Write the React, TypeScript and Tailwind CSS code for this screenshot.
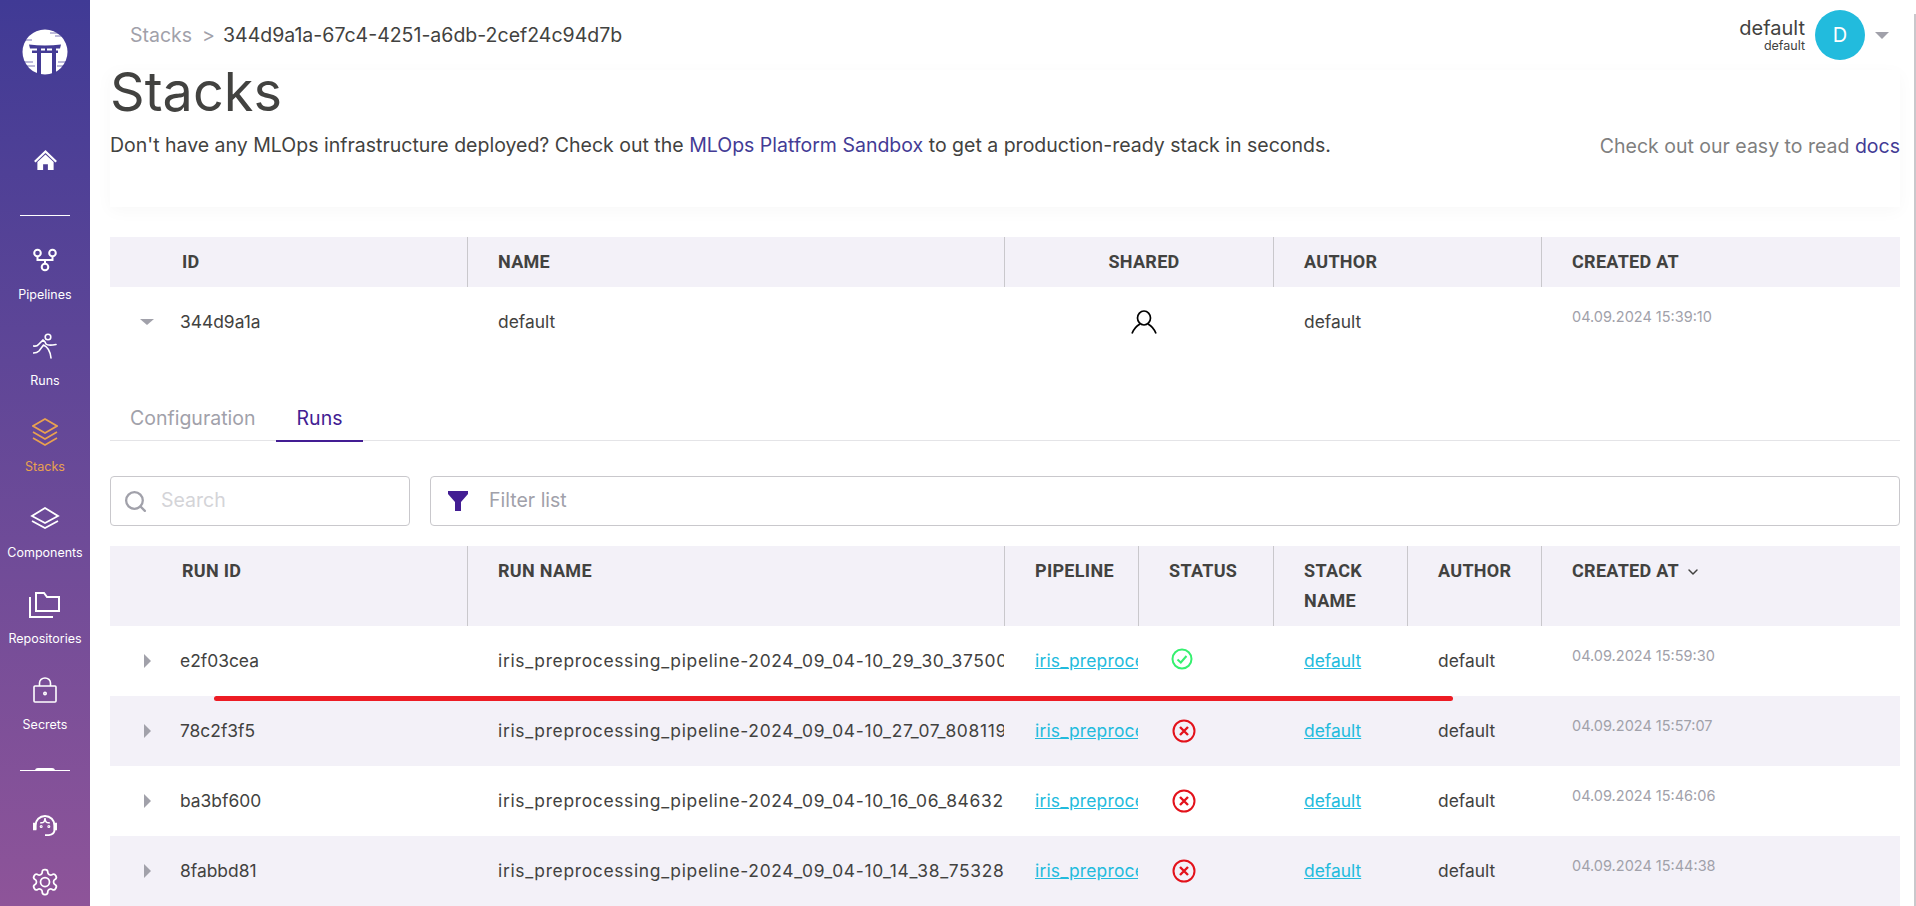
import { ChevronDown, Search } from "lucide-react";
import type { ReactNode } from "react";

const font = "font-['Inter','Liberation_Sans',sans-serif]";

const runs = [
  { id: "e2f03cea", name: "iris_preprocessing_pipeline-2024_09_04-10_29_30_375005", ok: true, date: "04.09.2024 15:59:30" },
  { id: "78c2f3f5", name: "iris_preprocessing_pipeline-2024_09_04-10_27_07_808119", ok: false, date: "04.09.2024 15:57:07" },
  { id: "ba3bf600", name: "iris_preprocessing_pipeline-2024_09_04-10_16_06_846321", ok: false, date: "04.09.2024 15:46:06" },
  { id: "8fabbd81", name: "iris_preprocessing_pipeline-2024_09_04-10_14_38_753281", ok: false, date: "04.09.2024 15:44:38" },
];

function Logo() {
  return (
    <svg width="46" height="46" viewBox="0 0 46 46">
      <circle cx="23" cy="23" r="22.5" fill="#fff" />
      <path d="M7 15.5 Q23 17.5 39 15.5 L38 19.5 H8 Z" fill="#433b95" />
      <path d="M10 21.5 H36 V24 H10 Z" fill="#433b95" />
      <path d="M15 19 H19 V46 H15 Z M30 19 H34 V46 H30 Z" fill="#433b95" />
      <path d="M23 19 H25 V22 H23 Z" fill="#433b95" />
      <path d="M0 11 H10 M33 7 H44 M28 4 H40 M1 33 H11 M36 33 H46 M3 37 H13 M35 37 H44" stroke="#433b95" strokeWidth="0.7" />
    </svg>
  );
}

function NavItem({ icon, label, active }: { icon: ReactNode; label: string; active?: boolean }) {
  return (
    <div className={`flex flex-col items-center h-[86px] ${active ? "text-[#e9a14f]" : "text-white"}`}>
      <div className="h-[36px] flex items-center justify-center">{icon}</div>
      <span className="mt-[8px] text-[12.5px] leading-[18px]">{label}</span>
    </div>
  );
}

function Sidebar() {
  return (
    <aside className="w-[90px] h-[906px] shrink-0 flex flex-col items-center bg-gradient-to-b from-[#403a95] to-[#8e5499] pt-[29px]">
      <Logo />
      <svg className="mt-[75px]" width="23" height="21" viewBox="0 0 24 22" fill="#fff">
        <path d="M12 0 L24 11.5 L22.4 13 L12 3.2 L1.6 13 L0 11.5 Z" />
        <path d="M3.5 12.5 L12 4.8 L20.5 12.5 V21 H14.5 V15 H9.5 V21 H3.5 Z" />
      </svg>
      <div className="mt-[44px] w-[50px] h-px bg-white" />
      <div className="mt-[26px] flex flex-col">
        <NavItem
          label="Pipelines"
          icon={
            <svg width="24" height="24" viewBox="0 0 24 24" fill="none" stroke="currentColor" strokeWidth="2">
              <circle cx="4.5" cy="5" r="3.3" />
              <circle cx="19.5" cy="5" r="3.3" />
              <circle cx="12" cy="19" r="3.3" />
              <path d="M4.5 8.5 V12 H19.5 V8.5 M12 12 V15.5" />
            </svg>
          }
        />
        <NavItem
          label="Runs"
          icon={
            <svg width="24" height="26" viewBox="0 0 24 26" fill="none" stroke="currentColor" strokeWidth="1.6" strokeLinecap="round">
              <circle cx="15" cy="4" r="2.8" />
              <path d="M0.5 13 Q4 13.5 5.5 11.5 L10 7 Q12 8 13 11 Q15 13 23 11.5 M10.5 12 L6 18 Q4 20 0.5 20 M10.5 12 Q17 15 18 25" />
            </svg>
          }
        />
        <NavItem
          active
          label="Stacks"
          icon={
            <svg width="26" height="28" viewBox="0 0 26 28" fill="none" stroke="currentColor" strokeWidth="1.7">
              <path d="M13 1 L25 8 L13 15 L1 8 Z" />
              <path d="M1 14 L13 21 L25 14 M1 20 L13 27 L25 20" />
            </svg>
          }
        />
        <NavItem
          label="Components"
          icon={
            <svg width="30" height="22" viewBox="0 0 30 22" fill="none" stroke="currentColor" strokeWidth="1.8">
              <path d="M15 1 L28 9 L15 16 L2 9 Z" />
              <path d="M2 14 L15 21 L28 14" />
            </svg>
          }
        />
        <NavItem
          label="Repositories"
          icon={
            <svg width="31" height="27" viewBox="0 0 31 27" fill="none" stroke="currentColor" strokeWidth="2">
              <path d="M7 20 V2 H15 L18 6 H30 V20 Z" />
              <path d="M1 6 V26 H24" />
            </svg>
          }
        />
        <NavItem
          label="Secrets"
          icon={
            <svg width="24" height="26" viewBox="0 0 24 26" fill="none" stroke="currentColor" strokeWidth="1.6">
              <rect x="1" y="9" width="22" height="16" rx="1" />
              <path d="M6.5 9 V6 A5.5 5 0 0 1 17.5 6 V9" />
              <circle cx="12" cy="16.5" r="1.2" />
            </svg>
          }
        />
      </div>
      <div className="relative mt-[12px] w-[50px] h-px bg-white">
        <div className="absolute left-[15px] top-[-2px] w-[20px] h-[3px] rounded-t-sm bg-white" />
      </div>
      <svg className="mt-[44px]" width="26" height="23" viewBox="0 0 26 24" fill="none" stroke="#fff" strokeWidth="2">
        <path d="M3 15 V11 A10 10 0 0 1 23 11 V15 Q23 20 17 21 H13" />
        <path d="M3 9 H1.5 V15 H3 Z M23 9 H24.5 V15 H23 Z" fill="#fff" />
        <path d="M8 8 Q13 9 13 3 Q13 9 18 8" strokeWidth="1.6" />
        <circle cx="9" cy="12" r="0.6" />
        <circle cx="17" cy="12" r="0.6" />
      </svg>
      <svg className="mt-[29px] shrink-0" width="30" height="30" viewBox="0 0 24 24" fill="none" stroke="#fff" strokeWidth="1.4" strokeLinejoin="round">
        <path d="M12.22 2h-.44a2 2 0 0 0-2 2v.18a2 2 0 0 1-1 1.73l-.43.25a2 2 0 0 1-2 0l-.15-.08a2 2 0 0 0-2.73.73l-.22.38a2 2 0 0 0 .73 2.73l.15.1a2 2 0 0 1 1 1.72v.51a2 2 0 0 1-1 1.74l-.15.09a2 2 0 0 0-.73 2.73l.22.38a2 2 0 0 0 2.73.73l.15-.08a2 2 0 0 1 2 0l.43.25a2 2 0 0 1 1 1.73V20a2 2 0 0 0 2 2h.44a2 2 0 0 0 2-2v-.18a2 2 0 0 1 1-1.73l.43-.25a2 2 0 0 1 2 0l.15.08a2 2 0 0 0 2.73-.73l.22-.39a2 2 0 0 0-.73-2.73l-.15-.08a2 2 0 0 1-1-1.74v-.5a2 2 0 0 1 1-1.74l.15-.09a2 2 0 0 0 .73-2.73l-.22-.38a2 2 0 0 0-2.73-.73l-.15.08a2 2 0 0 1-2 0l-.43-.25a2 2 0 0 1-1-1.73V4a2 2 0 0 0-2-2z" />
        <circle cx="12" cy="12" r="3.6" />
      </svg>
    </aside>
  );
}

function Triangle({ down }: { down?: boolean }) {
  return down ? (
    <svg width="14" height="6" viewBox="0 0 14 6" className="shrink-0">
      <path d="M0 0 H14 L7 6 Z" fill="#a1a1aa" />
    </svg>
  ) : (
    <svg width="7" height="14" viewBox="0 0 7 14" className="shrink-0">
      <path d="M0 0 L7 7 L0 14 Z" fill="#a1a1aa" />
    </svg>
  );
}

function Head({ children, line = true, className = "" }: { children: ReactNode; line?: boolean; className?: string }) {
  return (
    <div
      className={`pl-[30px] pr-2 pt-[10px] font-['Roboto',sans-serif] font-bold text-[18px] tracking-[0.3px] leading-[30px] text-[#424240] ${
        line ? "border-l border-[#c9c8cc]" : ""
      } ${className}`}
    >
      {children}
    </div>
  );
}

function StatusIcon({ ok }: { ok: boolean }) {
  if (ok) {
    return (
      <svg className="ml-[2px] mt-[-5px]" width="22" height="22" viewBox="0 0 22 22" fill="none" stroke="#35f06f" strokeWidth="2">
        <circle cx="11" cy="11" r="9.5" />
        <path d="M6.5 11.5 L9.8 14.5 L15.5 8" strokeWidth="2" />
      </svg>
    );
  }
  return (
    <svg className="ml-[3px]" width="24" height="24" viewBox="0 0 24 24" fill="none" stroke="#e3121b" strokeWidth="2">
      <circle cx="12" cy="12" r="10.5" />
      <path d="M8 8 L16 16 M16 8 L8 16" strokeWidth="2.4" />
    </svg>
  );
}

function RunRow({ run, index }: { run: (typeof runs)[number]; index: number }) {
  return (
    <div
      className={`grid grid-cols-[357px_537px_134px_135px_134px_134px_359px] h-[70px] items-center text-[17.4px] text-[#424240] ${
        index % 2 === 1 ? "bg-[#f3f1f8]" : "bg-white"
      }`}
    >
      <div className="flex items-center pl-[34px]">
        <Triangle />
        <span className="ml-[29px]">{run.id}</span>
      </div>
      <div className="pl-[31px] overflow-hidden whitespace-nowrap tracking-[0.68px]">{run.name}</div>
      <div className="pl-[31px] overflow-hidden whitespace-nowrap tracking-[0.2px] text-[#22bbdd] underline">iris_preprocessing_pipeline</div>
      <div className="pl-[31px]">
        <StatusIcon ok={run.ok} />
      </div>
      <div className="pl-[31px] text-[#22bbdd] underline">default</div>
      <div className="pl-[31px]">default</div>
      <div className="pl-[31px] mt-[-10px] text-[14.5px] text-[#a1a1aa]">{run.date}</div>
    </div>
  );
}

export default function App() {
  return (
    <div className={`relative flex w-[1916px] h-[906px] overflow-hidden bg-white ${font}`}>
      <Sidebar />
      <main className="flex-1 min-w-0 pl-[20px] pr-[16px] relative">
        {/* top bar */}
        <div className="h-[70px] flex items-start justify-between pt-[23px]">
          <div className="flex items-center pl-[20px] text-[19.5px] leading-[24px]">
            <span className="text-[#a1a1aa]">Stacks</span>
            <span className="ml-[10px] text-[#a1a1aa]">&gt;</span>
            <span className="ml-[8px] text-[#424240]">344d9a1a-67c4-4251-a6db-2cef24c94d7b</span>
          </div>
          <div className="flex items-center mt-[-13px] mr-[-5px]">
            <div className="text-right text-[#424240]">
              <div className="text-[20px] leading-[20px]">default</div>
              <div className="text-[12.5px] leading-[15px]">default</div>
            </div>
            <div className="ml-[10px] w-[50px] h-[50px] rounded-full bg-[#22bbdd] text-white flex items-center justify-center text-[20px]">D</div>
            <svg className="ml-[10px] mr-[16px]" width="14" height="7" viewBox="0 0 14 7">
              <path d="M0 0 H14 L7 7 Z" fill="#a1a1aa" />
            </svg>
          </div>
        </div>

        {/* page header */}
        <div className="h-[137px] shadow-[0_4px_16px_rgba(0,0,0,0.03)]">
          <h1 className="text-[54px] leading-[44px] text-[#424240]">Stacks</h1>
          <div className="mt-[19px] flex justify-between text-[19.5px] leading-[24px]">
            <p className="text-[#424240]">
              Don't have any MLOps infrastructure deployed? Check out the <span className="text-[#433b95]">MLOps Platform Sandbox</span> to get a production-ready stack in seconds.
            </p>
            <p className="text-[#7f7f7f] mt-px">
              Check out our easy to read <span className="text-[#433b95]">docs</span>
            </p>
          </div>
        </div>

        {/* stack table */}
        <div className="mt-[30px]">
          <div className="grid grid-cols-[357px_537px_269px_268px_359px] h-[50px] bg-[#f3f1f8]">
            <Head line={false} className="!pl-[72px]">ID</Head>
            <Head>NAME</Head>
            <Head className="!pl-[10px] !pr-0 text-center">SHARED</Head>
            <Head>AUTHOR</Head>
            <Head>CREATED AT</Head>
          </div>
          <div className="grid grid-cols-[357px_537px_269px_268px_359px] h-[70px] items-center text-[17.4px] text-[#424240]">
            <div className="flex items-center pl-[30px]">
              <Triangle down />
              <span className="ml-[26px]">344d9a1a</span>
            </div>
            <div className="pl-[31px]">default</div>
            <div className="flex justify-center pl-[10px] mt-[-1px]">
              <svg width="26" height="24" viewBox="0 0 26 24" fill="none" stroke="#000" strokeWidth="1.7">
                <ellipse cx="13" cy="8" rx="6.5" ry="7" />
                <path d="M1 23.5 Q3.5 17 9 14 M25 23.5 Q22.5 17 17 14" />
              </svg>
            </div>
            <div className="pl-[31px]">default</div>
            <div className="pl-[31px] mt-[-10px] text-[14.5px] text-[#a1a1aa]">04.09.2024 15:39:10</div>
          </div>
        </div>

        {/* tabs */}
        <div className="mt-[34px] h-[50px] flex border-b border-[#e4e4e7] text-[19.5px]">
          <div className="w-[166px] pl-[20px] pt-[13px] text-[#a1a1aa]">Configuration</div>
          <div className="w-[87px] h-[51px] pt-[13px] text-center text-[#431d93] border-b-2 border-[#431d93]">Runs</div>
        </div>

        {/* search + filter */}
        <div className="mt-[35px] flex gap-[20px] text-[19.5px]">
          <div className="w-[300px] h-[50px] flex items-center pl-[12px] border border-[#c9c8cc] rounded-[4px]">
            <Search size={25} strokeWidth={2.2} color="#a1a1aa" />
            <span className="ml-[13px] text-[#d4d4d8]">Search</span>
          </div>
          <div className="flex-1 h-[50px] flex items-center pl-[17px] border border-[#c9c8cc] rounded-[4px]">
            <svg width="20" height="20" viewBox="0 0 20 20">
              <path d="M0 0 H20 V3 L13 11 V20 H7 V11 L0 3 Z" fill="#431d93" />
            </svg>
            <span className="ml-[21px] text-[#a1a1aa]">Filter list</span>
          </div>
        </div>

        {/* runs table */}
        <div className="mt-[20px]">
          <div className="grid grid-cols-[357px_537px_134px_135px_134px_134px_359px] h-[80px] bg-[#f3f1f8]">
            <Head line={false} className="!pl-[72px]">RUN ID</Head>
            <Head>RUN NAME</Head>
            <Head>PIPELINE</Head>
            <Head>STATUS</Head>
            <Head>STACK NAME</Head>
            <Head>AUTHOR</Head>
            <Head className="flex items-start gap-[6px]">
              CREATED AT
              <ChevronDown size={16} strokeWidth={2.2} className="mt-[8px]" />
            </Head>
          </div>
          {runs.map((run, i) => (
            <RunRow key={run.id} run={run} index={i} />
          ))}
        </div>
      </main>

      {/* red annotation line */}
      <div className="absolute left-[214px] top-[696px] w-[1239px] h-[5px] rounded-full bg-[#ed1c24]" />
      {/* scrollbar edge */}
      <div className="absolute right-0 top-[14px] bottom-0 w-[2px] bg-[#c9c8cc]" />
    </div>
  );
}
